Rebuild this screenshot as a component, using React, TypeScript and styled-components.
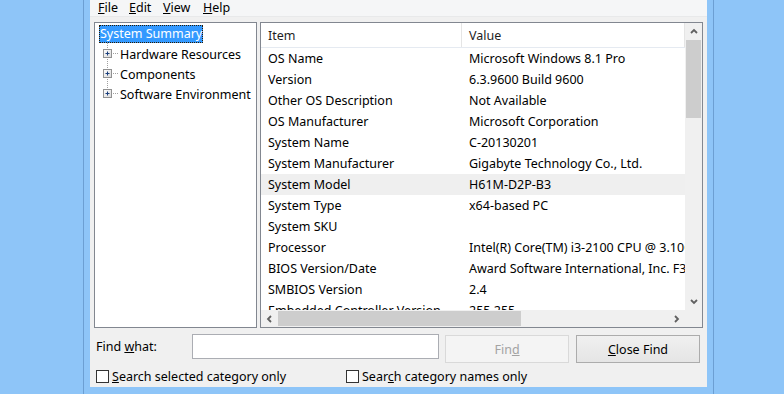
import React from 'react';
import styled, { createGlobalStyle } from 'styled-components';

const GlobalStyle = createGlobalStyle`
  html, body {
    margin: 0;
    padding: 0;
  }
  body {
    background: #8ec5f8;
    font-family: "Noto Sans", "Open Sans", sans-serif;
    font-size: 12.5px;
    color: #000;
    overflow: hidden;
  }
`;

const Desktop = styled.div`
  width: 784px;
  height: 394px;
  box-sizing: border-box;
  padding-left: 83px;
  background: #8ec5f8;
  overflow: hidden;
`;

const Window = styled.div`
  width: 631px;
  height: 394px;
  box-sizing: border-box;
  border-left: 1px solid #6c9fd3;
  border-right: 1px solid #6c9fd3;
  padding: 0 6px 7px;
  background: #8ec5f8;
  display: flex;
  flex-direction: column;
`;

const Client = styled.div`
  flex: 1;
  background: #f0f0f0;
  display: flex;
  flex-direction: column;
`;

const MenuBar = styled.div`
  height: 16px;
  background: #f5f6f7;
  border-bottom: 1px solid #e8e9ea;
  display: flex;
  align-items: center;
  padding-left: 8px;
`;

const MenuItem = styled.div<{ $w: number }>`
  width: ${(p) => p.$w}px;
  line-height: 18px;
  white-space: nowrap;
`;

const Panels = styled.div`
  display: flex;
  gap: 3px;
  height: 306px;
  margin-top: 5px;
  padding: 0 4px;
`;

const TreePanel = styled.div`
  width: 163px;
  box-sizing: border-box;
  border: 1px solid #828790;
  background: #fff;
  padding: 2px 0 0 4px;
`;

const RootLabel = styled.div`
  width: fit-content;
  height: 18px;
  box-sizing: border-box;
  padding: 0 1px;
  line-height: 17px;
  background: #3399ff;
  color: #fff;
  outline: 1px dotted #2a1a00;
  outline-offset: -1px;
  white-space: nowrap;
`;

const TreeRow = styled.div`
  display: flex;
  align-items: center;
  height: 20px;
  white-space: nowrap;
`;

const TreeText = styled.span`
  margin-top: 2px;
`;

const ListPanel = styled.div`
  flex: 1;
  box-sizing: border-box;
  border: 1px solid #828790;
  background: #fff;
  display: grid;
  grid-template-columns: 1fr 17px;
  grid-template-rows: 1fr 17px;
  min-width: 0;
`;

const ListBody = styled.div`
  overflow: hidden;
  min-width: 0;
`;

const HeaderRow = styled.div`
  display: flex;
  height: 24px;
  border-bottom: 1px solid #e5eaf1;
  color: #1e1e1e;
`;

const HeaderCell = styled.div<{ $w?: number }>`
  ${(p) => (p.$w ? `width: ${p.$w}px; flex: none;` : 'flex: 1;')}
  box-sizing: border-box;
  padding-left: 7px;
  line-height: 26px;
  border-right: 1px solid #e5e5e5;
  white-space: nowrap;
`;

const Row = styled.div<{ $hot?: boolean }>`
  display: flex;
  height: 21px;
  line-height: 22px;
  background: ${(p) => (p.$hot ? '#efefef' : 'transparent')};
  white-space: nowrap;
`;

const Cell = styled.div<{ $w?: number }>`
  ${(p) => (p.$w ? `width: ${p.$w}px; flex: none;` : 'flex: 1;')}
  box-sizing: border-box;
  padding-left: 7px;
  overflow: hidden;
`;

const VScroll = styled.div`
  background: #f0f0f0;
  display: flex;
  flex-direction: column;
`;

const HScroll = styled.div`
  background: #f0f0f0;
  display: flex;
  align-items: center;
`;

const ArrowBox = styled.div`
  width: 17px;
  height: 17px;
  flex: none;
  display: flex;
  align-items: center;
  justify-content: center;
`;

const VThumb = styled.div`
  height: 78px;
  background: #cdcdcd;
  margin: 0 1px;
`;

const HThumb = styled.div`
  width: 243px;
  height: 15px;
  background: #cdcdcd;
  margin: 1px 0;
`;

const Spacer = styled.div`
  flex: 1;
`;

const Corner = styled.div`
  background: #f0f0f0;
`;

const FindRow = styled.div`
  display: flex;
  align-items: flex-start;
  margin-top: 6px;
  padding-left: 6px;
  height: 28px;
`;

const FindLabel = styled.div`
  width: 96px;
  line-height: 26px;
  white-space: nowrap;
`;

const FindInput = styled.input`
  width: 247px;
  height: 25px;
  box-sizing: border-box;
  border: 1px solid #abadb3;
  background: #fff;
  margin: 0 6px 0 0;
  padding: 0 4px;
  outline: none;
`;

const Button = styled.button<{ $disabled?: boolean }>`
  width: 124px;
  height: 28px;
  margin: 1px 7px 0 0;
  box-sizing: border-box;
  font-family: inherit;
  font-size: 12.5px;
  border: 1px solid ${(p) => (p.$disabled ? '#d9d9d9' : '#acacac')};
  background: ${(p) =>
    p.$disabled ? '#f4f4f4' : 'linear-gradient(#f0f0f0, #e5e5e5)'};
  color: ${(p) => (p.$disabled ? '#a3a3a3' : '#000')};
  padding: 0;
`;

const CheckRow = styled.div`
  display: flex;
  margin-top: 6px;
  padding-left: 6px;
`;

const CheckItem = styled.label<{ $w: number }>`
  width: ${(p) => p.$w}px;
  display: flex;
  align-items: center;
  gap: 3px;
  white-space: nowrap;
`;

const CheckBox = styled.span`
  width: 13px;
  height: 13px;
  box-sizing: border-box;
  border: 1px solid #333;
  background: #fff;
  flex: none;
`;

const Chevron: React.FC<{ dir: 'up' | 'down' | 'left' | 'right' }> = ({ dir }) => {
  const pts = {
    up: '1,5 4,2 7,5',
    down: '1,2 4,5 7,2',
    left: '5,1 2,4 5,7',
    right: '2,1 5,4 2,7',
  }[dir];
  return (
    <svg width="8" height="8" viewBox="0 0 8 8">
      <polyline points={pts} fill="none" stroke="#606060" strokeWidth="1.8" />
    </svg>
  );
};

const Connector: React.FC<{ last?: boolean }> = ({ last }) => (
  <svg width="21" height="20" viewBox="0 0 21 20" style={{ flex: 'none' }}>
    <defs>
      <linearGradient id="pbox" x1="0" y1="0" x2="1" y2="1">
        <stop offset="0" stopColor="#ffffff" />
        <stop offset="1" stopColor="#d8d8d8" />
      </linearGradient>
    </defs>
    <line x1="8.5" y1="0" x2="8.5" y2={last ? 10 : 20} stroke="#a0a0a0" strokeDasharray="1 1" />
    <line x1="14" y1="10.5" x2="20" y2="10.5" stroke="#a0a0a0" strokeDasharray="1 1" />
    <rect x="4.5" y="6.5" width="8" height="8" fill="url(#pbox)" stroke="#919191" />
    <line x1="6.5" y1="10.5" x2="10.5" y2="10.5" stroke="#1b3f7c" />
    <line x1="8.5" y1="8.5" x2="8.5" y2="12.5" stroke="#1b3f7c" />
  </svg>
);

const rows: [string, string][] = [
  ['OS Name', 'Microsoft Windows 8.1 Pro'],
  ['Version', '6.3.9600 Build 9600'],
  ['Other OS Description', 'Not Available'],
  ['OS Manufacturer', 'Microsoft Corporation'],
  ['System Name', 'C-20130201'],
  ['System Manufacturer', 'Gigabyte Technology Co., Ltd.'],
  ['System Model', 'H61M-D2P-B3'],
  ['System Type', 'x64-based PC'],
  ['System SKU', ''],
  ['Processor', 'Intel(R) Core(TM) i3-2100 CPU @ 3.10GHz, 3100 Mhz, 2 Core(s), 4 Logical Processor(s)'],
  ['BIOS Version/Date', 'Award Software International, Inc. F3, 17/05/2011'],
  ['SMBIOS Version', '2.4'],
  ['Embedded Controller Version', '255.255'],
];

const treeItems = ['Hardware Resources', 'Components', 'Software Environment'];

const App: React.FC = () => {
  return (
    <Desktop>
      <GlobalStyle />
      <Window>
        <Client>
          <MenuBar>
            <MenuItem $w={31}><u>F</u>ile</MenuItem>
            <MenuItem $w={34}><u>E</u>dit</MenuItem>
            <MenuItem $w={40}><u>V</u>iew</MenuItem>
            <MenuItem $w={40}><u>H</u>elp</MenuItem>
          </MenuBar>
          <Panels>
            <TreePanel>
              <RootLabel>System Summary</RootLabel>
              {treeItems.map((item, i) => (
                <TreeRow key={item}>
                  <Connector last={i === treeItems.length - 1} />
                  <TreeText>{item}</TreeText>
                </TreeRow>
              ))}
            </TreePanel>
            <ListPanel>
              <ListBody>
                <HeaderRow>
                  <HeaderCell $w={201}>Item</HeaderCell>
                  <HeaderCell>Value</HeaderCell>
                </HeaderRow>
                {rows.map(([item, value]) => (
                  <Row key={item} $hot={item === 'System Model'}>
                    <Cell $w={201}>{item}</Cell>
                    <Cell>{value}</Cell>
                  </Row>
                ))}
              </ListBody>
              <VScroll>
                <ArrowBox><Chevron dir="up" /></ArrowBox>
                <VThumb />
                <Spacer />
                <ArrowBox><Chevron dir="down" /></ArrowBox>
              </VScroll>
              <HScroll>
                <ArrowBox><Chevron dir="left" /></ArrowBox>
                <HThumb />
                <Spacer />
                <ArrowBox><Chevron dir="right" /></ArrowBox>
              </HScroll>
              <Corner />
            </ListPanel>
          </Panels>
          <FindRow>
            <FindLabel>Find <u>w</u>hat:</FindLabel>
            <FindInput />
            <Button $disabled>Fin<u>d</u></Button>
            <Button><u>C</u>lose Find</Button>
          </FindRow>
          <CheckRow>
            <CheckItem $w={250}>
              <CheckBox />
              <span><u>S</u>earch selected category only</span>
            </CheckItem>
            <CheckItem $w={200}>
              <CheckBox />
              <span>Sear<u>c</u>h category names only</span>
            </CheckItem>
          </CheckRow>
        </Client>
      </Window>
    </Desktop>
  );
};

export default App;
